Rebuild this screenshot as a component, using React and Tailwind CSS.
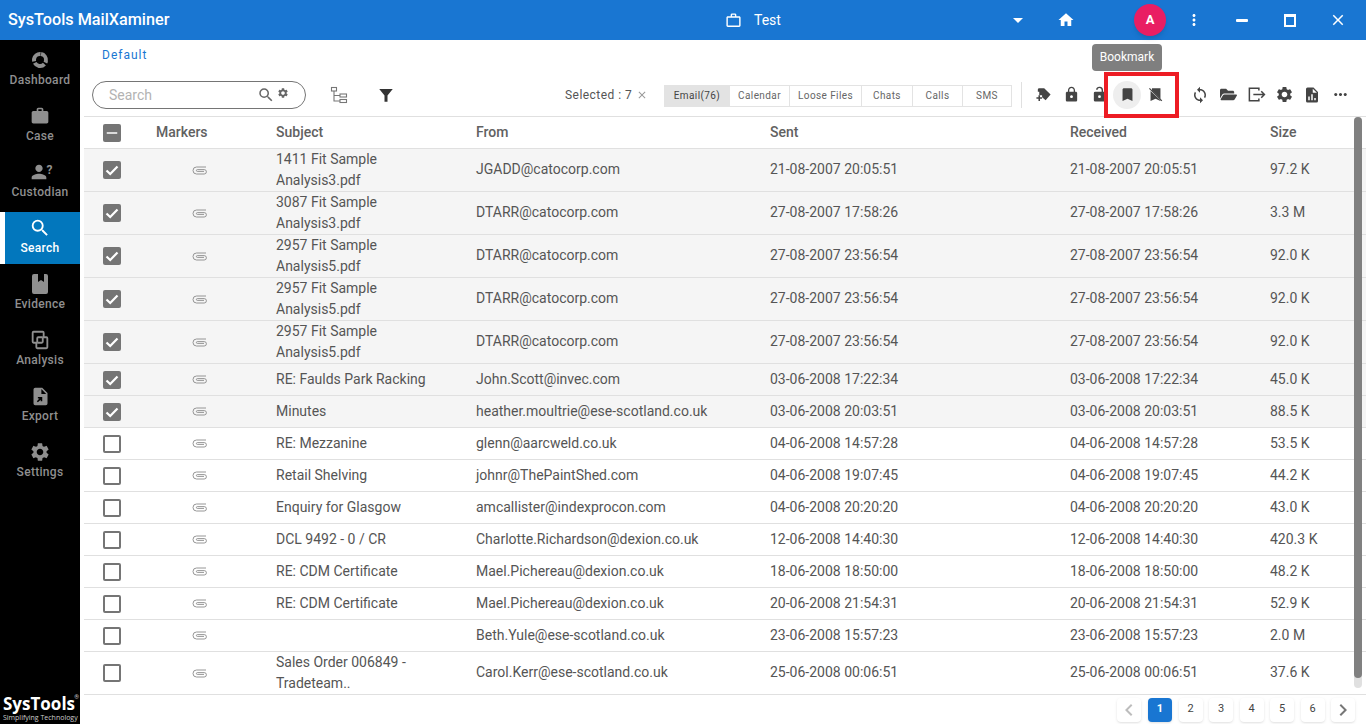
import {
  MdHome,
  MdMoreVert,
  MdClose,
  MdSearch,
  MdSettings,
  MdLock,
  MdBookmark,
  MdSync,
  MdMoreHoriz,
  MdWork,
  MdWorkOutline,
  MdPerson,
  MdChevronLeft,
  MdChevronRight,
  MdArrowDropDown,
  MdRemove,
} from 'react-icons/md'
import { FaFolderOpen } from 'react-icons/fa'

const rows = [
  { subject: ['1411 Fit Sample', 'Analysis3.pdf'], from: 'JGADD@catocorp.com', sent: '21-08-2007 20:05:51', size: '97.2 K', checked: true },
  { subject: ['3087 Fit Sample', 'Analysis3.pdf'], from: 'DTARR@catocorp.com', sent: '27-08-2007 17:58:26', size: '3.3 M', checked: true },
  { subject: ['2957 Fit Sample', 'Analysis5.pdf'], from: 'DTARR@catocorp.com', sent: '27-08-2007 23:56:54', size: '92.0 K', checked: true },
  { subject: ['2957 Fit Sample', 'Analysis5.pdf'], from: 'DTARR@catocorp.com', sent: '27-08-2007 23:56:54', size: '92.0 K', checked: true },
  { subject: ['2957 Fit Sample', 'Analysis5.pdf'], from: 'DTARR@catocorp.com', sent: '27-08-2007 23:56:54', size: '92.0 K', checked: true },
  { subject: ['RE: Faulds Park Racking'], from: 'John.Scott@invec.com', sent: '03-06-2008 17:22:34', size: '45.0 K', checked: true },
  { subject: ['Minutes'], from: 'heather.moultrie@ese-scotland.co.uk', sent: '03-06-2008 20:03:51', size: '88.5 K', checked: true },
  { subject: ['RE: Mezzanine'], from: 'glenn@aarcweld.co.uk', sent: '04-06-2008 14:57:28', size: '53.5 K' },
  { subject: ['Retail Shelving'], from: 'johnr@ThePaintShed.com', sent: '04-06-2008 19:07:45', size: '44.2 K' },
  { subject: ['Enquiry for Glasgow'], from: 'amcallister@indexprocon.com', sent: '04-06-2008 20:20:20', size: '43.0 K' },
  { subject: ['DCL 9492 - 0 / CR'], from: 'Charlotte.Richardson@dexion.co.uk', sent: '12-06-2008 14:40:30', size: '420.3 K' },
  { subject: ['RE: CDM Certificate'], from: 'Mael.Pichereau@dexion.co.uk', sent: '18-06-2008 18:50:00', size: '48.2 K' },
  { subject: ['RE: CDM Certificate'], from: 'Mael.Pichereau@dexion.co.uk', sent: '20-06-2008 21:54:31', size: '52.9 K' },
  { subject: [], from: 'Beth.Yule@ese-scotland.co.uk', sent: '23-06-2008 15:57:23', size: '2.0 M' },
  { subject: ['Sales Order 006849 -', 'Tradeteam..'], from: 'Carol.Kerr@ese-scotland.co.uk', sent: '25-06-2008 00:06:51', size: '37.6 K' },
]

const tabs = [
  { label: 'Email(76)', w: 'w-[64px]', active: true },
  { label: 'Calendar', w: 'w-[60px]' },
  { label: 'Loose Files', w: 'w-[72px]' },
  { label: 'Chats', w: 'w-[51px]' },
  { label: 'Calls', w: 'w-[50px]' },
  { label: 'SMS', w: 'w-[49px]' },
]

const gridCols = 'grid grid-cols-[56px_136px_200px_294px_300px_200px_1fr] items-center'

function DashboardIcon({ className }) {
  return (
    <svg viewBox="0 0 20 20" className={className} fill="none" stroke="currentColor" strokeWidth="4">
      <circle cx="10" cy="10" r="6" strokeDasharray="11 1.57" transform="rotate(-80 10 10)" />
    </svg>
  )
}

function EvidenceIcon({ className }) {
  return (
    <svg viewBox="0 0 24 24" className={className} fill="currentColor">
      <path d="M18 2h-2v8l-3-2-3 2V2H6a2 2 0 0 0-2 2v16a2 2 0 0 0 2 2h12a2 2 0 0 0 2-2V4a2 2 0 0 0-2-2z" />
    </svg>
  )
}

function AnalysisIcon({ className }) {
  return (
    <svg viewBox="0 0 24 24" className={className} fill="none" stroke="currentColor" strokeWidth="2">
      <path d="M9 15H5a1 1 0 0 1-1-1V4a1 1 0 0 1 1-1h10a1 1 0 0 1 1 1v5" />
      <path d="M15 9h4a1 1 0 0 1 1 1v10a1 1 0 0 1-1 1H9a1 1 0 0 1-1-1v-5" />
      <path d="M9 15V10a1 1 0 0 1 1-1h5M15 9v5a1 1 0 0 1-1 1H9" />
    </svg>
  )
}

function ExportIcon({ className }) {
  return (
    <svg viewBox="0 0 24 24" className={className} fill="currentColor">
      <path fillRule="evenodd" d="M14 2H6a2 2 0 0 0-2 2v16a2 2 0 0 0 2 2h12a2 2 0 0 0 2-2V8l-6-6zm-1 1.5L18.5 9H13V3.5zM9 18.5l-1.2-1.2 3-3H9v-1.8h5v5h-1.8v-1.8l-3.2 3z" />
    </svg>
  )
}

function ReportIcon({ className }) {
  return (
    <svg viewBox="0 0 24 24" className={className} fill="currentColor">
      <path fillRule="evenodd" d="M14 2H6a2 2 0 0 0-2 2v16a2 2 0 0 0 2 2h12a2 2 0 0 0 2-2V8l-6-6zM9 19H7v-5h2v5zm4 0h-2v-8h2v8zm4 0h-2v-3h2v3zM13 9V3.5L18.5 9H13z" />
    </svg>
  )
}

function BookmarkOffIcon({ className }) {
  return (
    <svg viewBox="0 0 24 24" className={className} fill="currentColor">
      <path d="M7 3h12v15.2L7 6.2V5 3zM5 7.2V21l7-3 7 3v-.8L5 7.2z" />
      <path d="M3.4 3.4 21 21" stroke="currentColor" strokeWidth="1.6" />
    </svg>
  )
}

function LockOpenFilledIcon({ className }) {
  return (
    <svg viewBox="0 0 24 24" className={className} fill="currentColor">
      <path fillRule="evenodd" d="M18 8h-1V6a5 5 0 0 0-9.9-1l1.9.5A3 3 0 0 1 15 6v2H6a2 2 0 0 0-2 2v10a2 2 0 0 0 2 2h12a2 2 0 0 0 2-2V10a2 2 0 0 0-2-2zm-6 9a2 2 0 1 1 0-4 2 2 0 0 1 0 4z" />
    </svg>
  )
}

function TagPlusIcon({ className }) {
  return (
    <svg viewBox="0 0 24 24" className={className} fill="currentColor">
      <path d="M6 3h7l9 9-7 8-5-4v-3H6V8H4V5a2 2 0 0 1 2-2z" />
      <path d="M2 17h8M6 13v8" fill="none" stroke="currentColor" strokeWidth="2.2" />
    </svg>
  )
}

function ExitBoxIcon({ className }) {
  return (
    <svg viewBox="0 0 24 24" className={className} fill="none" stroke="currentColor" strokeWidth="1.9">
      <path d="M15 7V4H3v16h12v-3" />
      <path d="M8 12h14M18 8l4 4-4 4" />
    </svg>
  )
}

function FunnelIcon({ className }) {
  return (
    <svg viewBox="0 0 24 24" className={className} fill="currentColor">
      <path d="M3 4h18l-7 8.5V21h-4v-8.5z" />
    </svg>
  )
}

function HierarchyIcon({ className }) {
  return (
    <svg viewBox="0 0 18 18" className={className} fill="none" stroke="currentColor" strokeWidth="1.1">
      <rect x="1.5" y="1.5" width="5" height="3.5" />
      <rect x="10" y="8" width="6.5" height="3" />
      <rect x="10" y="13.5" width="6.5" height="3" />
      <path d="M4 5v10h6M4 9.5h6" />
    </svg>
  )
}

function ClipIcon() {
  return (
    <svg viewBox="0 0 15 9" className="w-[15px] h-[9px] text-[#8a8a8a]" fill="none" stroke="currentColor" strokeWidth="0.9">
      <path d="M14 1H4.5a3.4 3.4 0 0 0 0 7h7.7a2 2 0 0 0 0-4.4H5.3a.8.8 0 0 0 0 1.8H12" />
    </svg>
  )
}

function Checkbox({ checked, mixed }) {
  if (checked || mixed) {
    return (
      <span className="w-[18px] h-[18px] rounded-[2px] bg-[#757575] flex items-center justify-center text-white">
        {mixed ? (
          <MdRemove size={18} />
        ) : (
          <svg viewBox="0 0 18 18" className="w-[18px] h-[18px]" fill="none" stroke="currentColor" strokeWidth="2.2">
            <path d="M3.5 9.5 7.2 13l7.3-7.5" />
          </svg>
        )}
      </span>
    )
  }
  return <span className="w-[18px] h-[18px] rounded-[2px] border-2 border-[#757575] bg-white block" />
}

function NavItem({ icon, label, active }) {
  return (
    <div
      className={
        active
          ? 'h-[52px] border-l-[5px] border-white bg-[#0277bd] text-white flex flex-col items-center'
          : 'h-[52px] text-[#8f8f8f] flex flex-col items-center'
      }
    >
      <div className={active ? 'h-6 mt-1 -ml-[5px] flex items-center justify-center' : 'h-6 mt-1 flex items-center justify-center'}>{icon}</div>
      <span className={active ? 'text-xs font-medium tracking-[0.3px] leading-[18px] -mt-px -ml-[5px]' : 'text-xs font-medium tracking-[0.3px] leading-[18px] -mt-px'}>{label}</span>
    </div>
  )
}

function ToolIcon({ children, active }) {
  return (
    <div className={active ? 'w-7 h-7 rounded-full bg-[#eeeeee] flex items-center justify-center text-[#444]' : 'w-7 h-7 rounded-full flex items-center justify-center text-[#444]'}>
      {children}
    </div>
  )
}

export default function App() {
  return (
    <div className="h-[724px] w-[1366px] overflow-hidden flex flex-col bg-white font-['Roboto',sans-serif] text-[#555]">
      <header className="h-10 bg-[#1976d2] text-white flex items-center shrink-0">
        <div className="w-[700px] pl-2 text-[16.2px] font-medium">SysTools MailXaminer</div>
        <div className="flex items-center ml-[25px] w-[280px]">
          <MdWorkOutline size={17} />
          <span className="ml-[12px] text-sm">Test</span>
        </div>
        <MdArrowDropDown size={24} className="ml-[1px]" />
        <MdHome size={18} className="ml-[27px]" />
        <div className="ml-[59px] w-8 h-8 rounded-full bg-[#e91e63] shadow-md flex items-center justify-center text-[13px] font-bold">A</div>
        <MdMoreVert size={18} className="ml-[19px]" />
        <div className="ml-[33px] w-3 h-[3px] rounded-[1px] bg-white" />
        <div className="ml-[36px] w-[12px] h-[13px] border-2 border-t-[3px] border-white" />
        <MdClose size={18} className="ml-[33px]" />
      </header>

      <div className="flex-1 flex min-h-0">
        <aside className="w-20 bg-black relative shrink-0 flex flex-col gap-1 pt-1">
          <NavItem label="Dashboard" icon={<DashboardIcon className="w-5 h-5" />} />
          <NavItem label="Case" icon={<MdWork size={20} />} />
          <NavItem
            label="Custodian"
            icon={
              <span className="flex items-center">
                <MdPerson size={22} />
                <span className="text-xs font-bold -ml-[3px] -mt-1">?</span>
              </span>
            }
          />
          <NavItem label="Search" active icon={<MdSearch size={22} />} />
          <NavItem label="Evidence" icon={<EvidenceIcon className="w-6 h-6" />} />
          <NavItem label="Analysis" icon={<AnalysisIcon className="w-[22px] h-[22px]" />} />
          <NavItem label="Export" icon={<ExportIcon className="w-[21px] h-[21px]" />} />
          <NavItem label="Settings" icon={<MdSettings size={22} />} />
          <div className="absolute left-0 bottom-0 w-20 h-[30px] pl-[3px] text-white">
            <span className="absolute right-[1px] top-0 text-[6px] leading-[6px] text-[#cccccc]">®</span>
            <div className="font-['Open_Sans',sans-serif] font-bold text-[17px] leading-[19px]">SysTools</div>
            <div className="font-['Open_Sans',sans-serif] text-[7px] leading-[10px] text-[#cccccc] whitespace-nowrap">Simplifying Technology</div>
          </div>
        </aside>

        <main className="flex-1 min-w-0 flex flex-col relative">
          <div className="h-[35px] pl-[22px] pt-[7px] text-xs tracking-[1px] text-[#1976d2] leading-4">Default</div>

          <div className="ml-1 h-[42px] border-b border-[#e0e0e0] flex items-center pb-[2px] relative">
            <div className="ml-2 w-[214px] h-[28px] rounded-full border border-[#757575] flex items-center pl-4 pr-4 shrink-0">
              <span className="text-sm text-[#b3b3b3] flex-1">Search</span>
              <MdSearch size={18} className="text-[#666]" />
              <MdSettings size={12} className="text-[#666] ml-[2px] -mt-[3px]" />
            </div>
            <HierarchyIcon className="w-[18px] h-[18px] ml-6 text-[#777]" />
            <FunnelIcon className="w-[18px] h-[18px] ml-[29px] text-[#333]" />

            <span className="ml-[170px] text-xs tracking-[0.45px] whitespace-nowrap w-[73px]">Selected : 7</span>
            <MdClose size={12} className="text-[#999] -ml-[2px]" />
            <div className="ml-[16px] mt-[2px] flex border border-[#e3e3e3] h-[22px]">
              {tabs.map((t) => (
                <div
                  key={t.label}
                  className={
                    t.active
                      ? `${t.w} bg-[#e3e3e3] text-[#444] text-[10px] tracking-[0.4px] flex items-center justify-center`
                      : `${t.w} border-l border-[#e3e3e3] text-[#666] text-[10px] tracking-[0.4px] flex items-center justify-center`
                  }
                >
                  {t.label}
                </div>
              ))}
            </div>
            <div className="ml-[9px] w-px h-[26px] bg-[#e0e0e0]" />
            <div className="ml-[7px] flex items-center">
              <ToolIcon><TagPlusIcon className="w-[17px] h-[17px]" /></ToolIcon>
              <ToolIcon><MdLock size={17} /></ToolIcon>
              <ToolIcon><LockOpenFilledIcon className="w-[17px] h-[17px]" /></ToolIcon>
              <ToolIcon active><MdBookmark size={17} /></ToolIcon>
              <ToolIcon><BookmarkOffIcon className="w-[17px] h-[17px]" /></ToolIcon>
            </div>
            <div className="ml-[17px] flex items-center">
              <ToolIcon><MdSync size={18} /></ToolIcon>
              <ToolIcon><FaFolderOpen size={17} /></ToolIcon>
              <ToolIcon><ExitBoxIcon className="w-[19px] h-[19px]" /></ToolIcon>
              <ToolIcon><MdSettings size={19} /></ToolIcon>
              <ToolIcon><ReportIcon className="w-[18px] h-[18px]" /></ToolIcon>
              <ToolIcon><MdMoreHoriz size={19} /></ToolIcon>
            </div>
          </div>

          {/* tooltip and highlight frame sit over the toolbar */}
          <div className="absolute left-[1012px] top-[4px] w-[70px] h-[27px] pb-[2px] rounded bg-[#7f7f7f] text-white text-xs flex items-center justify-center">Bookmark</div>
          <div className="absolute left-[1024px] top-[32px] w-[75px] h-[46px] border-4 border-[#ed1c24]" />

          <div className="flex-1 min-h-0 flex flex-col ml-1 relative">
            <div className={`${gridCols} h-8 border-b border-[#e0e0e0] text-sm leading-[21px] font-medium text-[#616161] shrink-0`}>
              <div className="pl-[19px] flex"><Checkbox mixed /></div>
              <div className="pl-4">Markers</div>
              <div>Subject</div>
              <div>From</div>
              <div>Sent</div>
              <div>Received</div>
              <div>Size</div>
            </div>
            {rows.map((r, i) => {
              const tall = r.subject.length > 1
              const cell = tall ? 'pb-[2px]' : ''
              return (
                <div
                  key={i}
                  className={`${gridCols} ${tall ? 'h-[43px]' : 'h-8'} ${r.checked ? 'bg-[#f5f5f5]' : 'bg-white'} border-b border-[#e0e0e0] text-sm leading-[21px] shrink-0`}
                >
                  <div className="pl-[19px] flex"><Checkbox checked={r.checked} /></div>
                  <div className="pl-[52px] flex"><ClipIcon /></div>
                  <div>
                    {r.subject.map((line) => (
                      <div key={line}>{line}</div>
                    ))}
                  </div>
                  <div className={cell}>{r.from}</div>
                  <div className={cell}>{r.sent}</div>
                  <div className={cell}>{r.sent}</div>
                  <div className={cell}>{r.size}</div>
                </div>
              )
            })}
            <div className="flex-1 flex items-center justify-end gap-[6.5px] pr-[11px]">
              <div className="w-6 h-6 mr-px rounded bg-white shadow-sm flex items-center justify-center text-[#bdbdbd]"><MdChevronLeft size={24} /></div>
              <div className="w-6 h-6 rounded bg-[#1976d2] text-white font-bold text-[11px] flex items-center justify-center shadow-sm">1</div>
              {[2, 3, 4, 5, 6].map((n) => (
                <div key={n} className="w-6 h-6 rounded bg-white shadow-sm text-[11px] text-[#444] flex items-center justify-center">{n}</div>
              ))}
              <div className="w-6 h-6 rounded bg-white shadow-sm flex items-center justify-center text-[#777]"><MdChevronRight size={24} /></div>
            </div>
            {/* scrollbar floats over the right end of the rows */}
            <div className="absolute right-[4px] top-0 w-2 h-[571px] rounded-full bg-[#e0e0e0]">
              <div className="w-2 h-[561px] rounded-full bg-[#808080]" />
            </div>
          </div>
        </main>
      </div>
    </div>
  )
}
